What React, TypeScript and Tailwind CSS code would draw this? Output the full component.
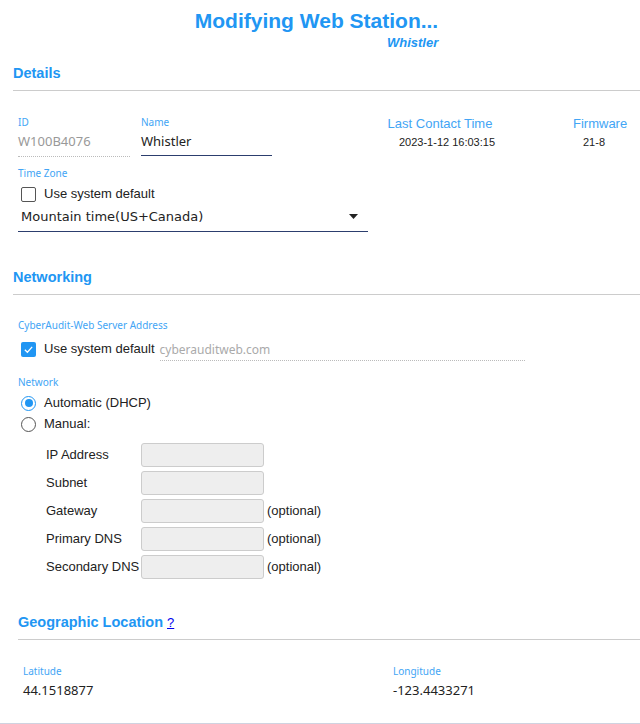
import React from 'react';

const blue = 'text-[#2196f3]';

function FieldLabel({ children }: { children: React.ReactNode }) {
  return <div className="text-[10px] leading-[12px] text-[#42a5f5] font-['Noto_Sans',sans-serif]">{children}</div>;
}

function SectionTitle({ children }: { children: React.ReactNode }) {
  return <h2 className={`text-[14.5px] leading-[18px] font-bold ${blue}`}>{children}</h2>;
}

function Checkbox({ checked }: { checked?: boolean }) {
  return checked ? (
    <span className="w-[15px] h-[15px] rounded-[2px] bg-[#2196f3] flex items-center justify-center">
      <svg width="11" height="11" viewBox="0 0 12 12" fill="none">
        <path d="M2 6.2 L4.8 9 L10 3.2" stroke="white" strokeWidth="1.4" />
      </svg>
    </span>
  ) : (
    <span className="w-[15px] h-[15px] rounded-[2px] border-[1.5px] border-[#555] bg-white" />
  );
}

function Radio({ checked }: { checked?: boolean }) {
  return checked ? (
    <span className="w-[15px] h-[15px] rounded-full border-[1.5px] border-[#2196f3] flex items-center justify-center">
      <span className="w-[8px] h-[8px] rounded-full bg-[#2196f3]" />
    </span>
  ) : (
    <span className="w-[15px] h-[15px] rounded-full border-[1.5px] border-[#555]" />
  );
}

const manualRows = [
  { label: 'IP Address', optional: false },
  { label: 'Subnet', optional: false },
  { label: 'Gateway', optional: true },
  { label: 'Primary DNS', optional: true },
  { label: 'Secondary DNS', optional: true },
];

export default function App() {
  return (
    <div className="w-[640px] h-[724px] bg-white overflow-hidden font-['Liberation_Sans',Arial,sans-serif] text-[#222]">
      {/* header */}
      <div className="flex justify-center pr-[7px] pt-[9px]">
        <div className="text-right">
          <h1 className={`text-[21px] leading-[24px] font-bold ${blue}`}>Modifying Web Station...</h1>
          <div className={`mt-[2px] text-[13px] leading-[16px] font-bold italic ${blue}`}>Whistler</div>
        </div>
      </div>

      {/* Details */}
      <div className="pl-[13px] mt-[13px]">
        <SectionTitle>Details</SectionTitle>
        <div className="mt-[8px] h-px bg-[#ccc]" />
      </div>

      <div className="pl-[18px] mt-[25px] flex items-start">
        <div className="w-[112px]">
          <FieldLabel>ID</FieldLabel>
          <div className="mt-[5px] pb-[7px] text-[13px] leading-[16px] text-[#999] font-['Noto_Sans',sans-serif] border-b border-dotted border-[#bbb]">
            W100B4076
          </div>
        </div>
        <div className="ml-[11px] w-[131px]">
          <FieldLabel>Name</FieldLabel>
          <div className="mt-[5px] pb-[6px] text-[13px] leading-[16px] text-[#222] font-['Noto_Sans',sans-serif] border-b border-[#2c3e6e]">
            Whistler
          </div>
        </div>
        <div className="ml-[108px] w-[120px] flex flex-col items-center">
          <div className="text-[13px] leading-[16px] text-[#42a5f5]">Last Contact Time</div>
          <div className="mt-[3px] text-[11px] leading-[14px] text-[#222] pl-[14px]">2023-1-12 16:03:15</div>
        </div>
        <div className="ml-[73px]">
          <div className="text-[13px] leading-[16px] text-[#42a5f5]">Firmware</div>
          <div className="mt-[3px] text-[11px] leading-[14px] text-[#222] pl-[10px]">21-8</div>
        </div>
      </div>

      <div className="pl-[18px] mt-[10px]">
        <FieldLabel>Time Zone</FieldLabel>
        <label className="mt-[7px] ml-[3px] flex items-center gap-[8px] text-[13px] leading-[16px]">
          <Checkbox />
          Use system default
        </label>
        <div className="mt-[6px] w-[350px] flex items-center justify-between pl-[3px] pr-[10px] pb-[6px] border-b border-[#2c3e6e] font-['DejaVu_Sans',sans-serif] text-[13px] leading-[17px] text-[#222]">
          <span>Mountain time(US+Canada)</span>
          <svg width="9" height="5" viewBox="0 0 9 5">
            <path d="M0 0 H9 L4.5 5 Z" fill="#222" />
          </svg>
        </div>
      </div>

      {/* Networking */}
      <div className="pl-[13px] mt-[36px]">
        <SectionTitle>Networking</SectionTitle>
        <div className="mt-[8px] h-px bg-[#ccc]" />
      </div>

      <div className="pl-[18px] mt-[24px]">
        <FieldLabel>CyberAudit-Web Server Address</FieldLabel>
        <div className="mt-[10px] flex items-start">
          <label className="ml-[3px] flex items-center gap-[8px] text-[13px] leading-[16px]">
            <Checkbox checked />
            Use system default
          </label>
          <div className="ml-[5px] w-[365px] mt-[1px] pb-[3px] text-[12px] leading-[15px] text-[#aaa] font-['Noto_Sans',sans-serif] border-b border-dotted border-[#bbb]">
            cyberauditweb.com
          </div>
        </div>

        <div className="mt-[15px]">
          <FieldLabel>Network</FieldLabel>
        </div>
        <div className="mt-[7px] ml-[3px] flex flex-col gap-[5px] text-[13px] leading-[16px]">
          <label className="flex items-center gap-[8px]">
            <Radio checked />
            Automatic (DHCP)
          </label>
          <label className="flex items-center gap-[8px]">
            <Radio />
            Manual:
          </label>
        </div>

        <div className="mt-[11px] ml-[28px] flex flex-col gap-[4px]">
          {manualRows.map((r) => (
            <div key={r.label} className="flex items-center text-[13px] leading-[16px]">
              <span className="w-[95px]">{r.label}</span>
              <span className="w-[123px] h-[24px] rounded-[3px] border border-[#ccc] bg-[#eee]" />
              {r.optional && <span className="ml-[3px]">(optional)</span>}
            </div>
          ))}
        </div>
      </div>

      {/* Geographic Location */}
      <div className="pl-[18px] mt-[34px]">
        <div className="flex items-baseline gap-[4px]">
          <SectionTitle>Geographic Location</SectionTitle>
          <a className="text-[13px] text-[#00e] underline">?</a>
        </div>
        <div className="mt-[6px] h-px bg-[#ccc]" />
      </div>

      <div className="pl-[23px] mt-[25px] flex">
        <div className="w-[370px]">
          <FieldLabel>Latitude</FieldLabel>
          <div className="mt-[5px] text-[13px] leading-[16px] font-['Noto_Sans',sans-serif] text-[#222]">44.1518877</div>
        </div>
        <div>
          <FieldLabel>Longitude</FieldLabel>
          <div className="mt-[5px] text-[13px] leading-[16px] font-['Noto_Sans',sans-serif] text-[#222]">-123.4433271</div>
        </div>
      </div>

      <div className="mt-[25px] h-px bg-[#cfd3e0]" />
    </div>
  );
}
